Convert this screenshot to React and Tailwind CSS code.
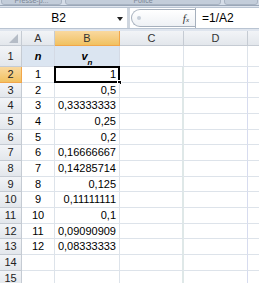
import React from "react";

const vals = [
  ["1", "1"],
  ["2", "0,5"],
  ["3", "0,33333333"],
  ["4", "0,25"],
  ["5", "0,2"],
  ["6", "0,16666667"],
  ["7", "0,14285714"],
  ["8", "0,125"],
  ["9", "0,11111111"],
  ["10", "0,1"],
  ["11", "0,09090909"],
  ["12", "0,08333333"],
];

const heights = [16, 15, 16, 16, 15, 16, 16, 15, 16, 16, 15, 16, 16, 16];

const font = { fontFamily: '"Liberation Sans", Arial, sans-serif' };

function RowHeader({ n, active, h }) {
  return (
    <div
      className={`flex items-center justify-center border-b border-r text-[11px] ${
        active
          ? "bg-gradient-to-b from-[#f9d99f] to-[#f1c15f] border-[#f2a64a] text-[#222]"
          : "bg-gradient-to-b from-[#f2f4f7] to-[#e3e7ec] border-[#c5cbd3] text-[#222]"
      }`}
      style={{ height: h }}
    >
      {n}
    </div>
  );
}

export default function App() {
  const rows = [];
  rows.push(
    <React.Fragment key="r1">
      <RowHeader n="1" h={21} />
      <div className="flex items-center justify-center border-b border-r border-[#d4dae5] bg-[#dbe5f1] text-[11px] font-bold italic text-black">
        n
      </div>
      <div className="flex items-center justify-center border-b border-r border-[#d4dae5] bg-[#dbe5f1] text-[11px] font-bold italic text-black">
        <span>
          v<sub className="text-[8px] align-sub">n</sub>
        </span>
      </div>
      <div className="border-b border-r border-[#dde3ea] bg-white" />
      <div className="border-b border-r border-[#dde3ea] bg-white" />
      <div className="border-b border-[#dde3ea] bg-white" />
    </React.Fragment>
  );
  for (let i = 0; i < 14; i++) {
    const h = heights[i];
    const v = vals[i];
    const selected = i === 0;
    rows.push(
      <React.Fragment key={i}>
        <RowHeader n={String(i + 2)} active={selected} h={h} />
        <div className="flex items-center justify-center border-b border-r border-[#dde3ea] bg-white text-[11px] text-black">
          {v ? v[0] : ""}
        </div>
        <div className="relative flex items-center justify-end border-b border-r border-[#dde3ea] bg-white pr-[3px] text-[11px] text-black">
          {v ? v[1] : ""}
          {selected && (
            <>
              <div className="pointer-events-none absolute -left-[1px] -top-[1px] -right-[1px] -bottom-[1px] border-2 border-black" />
              <div className="absolute -bottom-[3px] -right-[3px] h-[5px] w-[5px] border border-white bg-black" />
            </>
          )}
        </div>
        <div className="border-b border-r-2 border-[#dde3ea] border-r-[#dfe8e8] bg-white" />
        <div className="border-b border-r border-[#dde3ea] border-r-[#d7dcef] bg-white" />
        <div className="border-b border-[#dde3ea] bg-white" />
      </React.Fragment>
    );
  }

  return (
    <div className="h-[283px] w-[259px] overflow-hidden bg-[#dfe5ee]" style={font}>
      {/* ribbon remnant */}
      <div className="flex h-[6px] gap-[3px] overflow-hidden border-b border-[#9aa7b8] bg-[#d5dde8] px-[1px]">
        <div className="-mt-[4px] flex h-[9px] w-[61px] items-end justify-center rounded-b-[3px] border border-[#a8b3c2] bg-[#c3cdda] text-[7px] leading-none text-[#7a8595]">
          Presse-p...
        </div>
        <div className="-mt-[4px] flex h-[9px] w-[156px] items-end justify-center rounded-b-[3px] border border-[#a8b3c2] bg-[#c3cdda] text-[7px] leading-none text-[#7a8595]">
          Police
        </div>
        <div className="-mt-[4px] h-[9px] flex-1 rounded-b-[3px] border border-[#a8b3c2] bg-[#c3cdda]" />
      </div>
      {/* formula bar */}
      <div className="mt-[1px] flex h-[22px] items-stretch border-y border-[#b9c4d2] bg-white">
        <div className="relative flex w-[127px] items-center justify-center text-[12px] text-black">
          <span className="-ml-[10px]">B2</span>
          <svg className="absolute right-[4px] top-[9px]" width="6" height="4" viewBox="0 0 6 4">
            <path d="M0 0H6L3 4Z" fill="#222" />
          </svg>
        </div>
        <div className="w-[3px] bg-[#cfd6df]" />
        <div className="my-[1px] ml-[1px] flex w-[64px] items-center rounded-l-[10px] border border-r-0 border-[#a6b0bd] bg-gradient-to-b from-white to-[#eef1f5]">
          <div className="ml-[5px] h-[4px] w-[4px] rounded-full bg-[#c6ced8]" />
          <span className="ml-auto mr-[6px] font-['Liberation_Serif'] text-[11px] italic text-[#333]">
            f<span className="text-[7px]">x</span>
          </span>
        </div>
        <div className="w-[1px] bg-[#a6b0bd]" />
        <div className="flex flex-1 items-center pl-[6px] text-[12px] text-black">=1/A2</div>
      </div>
      {/* grid */}
      <div
        className="mt-[2px] grid"
        style={{
          gridTemplateColumns: "22px 33px 65px 64px 64px 11px",
          gridTemplateRows: `15px 21px ${heights.map((h) => h + "px").join(" ")}`,
        }}
      >
        <div className="relative border-b border-r border-[#c5cbd3] bg-gradient-to-b from-[#f2f4f7] to-[#e3e7ec]">
          <svg className="absolute bottom-[2px] right-[3px]" width="9" height="9" viewBox="0 0 9 9">
            <path d="M9 0V9H0Z" fill="#b5bcc6" />
          </svg>
        </div>
        <div className="flex items-center justify-center border-b border-r border-[#c5cbd3] bg-gradient-to-b from-[#f2f4f7] to-[#e3e7ec] text-[11px] text-[#333]">
          A
        </div>
        <div className="flex items-center justify-center border-b border-r border-[#f2a64a] bg-gradient-to-b from-[#f9d99f] to-[#f1c15f] text-[11px] text-[#333]">
          B
        </div>
        <div className="flex items-center justify-center border-b border-r border-[#c5cbd3] bg-gradient-to-b from-[#f2f4f7] to-[#e3e7ec] text-[11px] text-[#333]">
          C
        </div>
        <div className="flex items-center justify-center border-b border-r border-[#c5cbd3] bg-gradient-to-b from-[#f2f4f7] to-[#e3e7ec] text-[11px] text-[#333]">
          D
        </div>
        <div className="border-b border-[#c5cbd3] bg-gradient-to-b from-[#f2f4f7] to-[#e3e7ec]" />
        {rows}
      </div>
    </div>
  );
}
